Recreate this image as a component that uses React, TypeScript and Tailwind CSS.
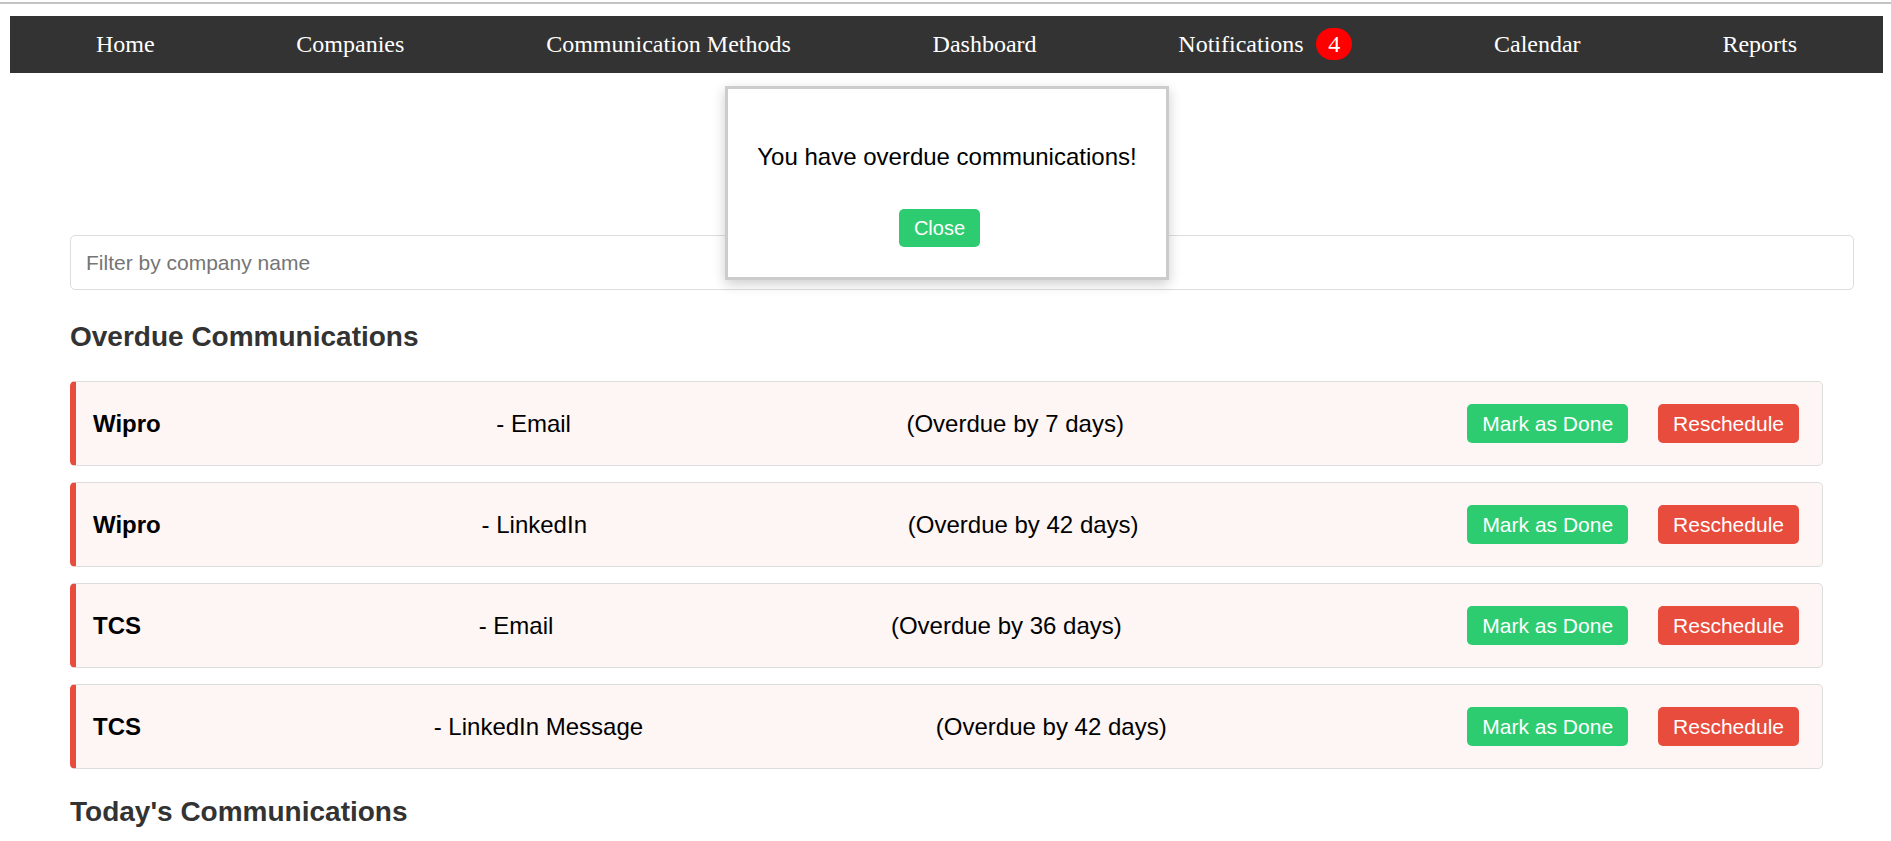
const navItems = ["Home", "Companies", "Communication Methods", "Dashboard", "Notifications", "Calendar", "Reports"];

const overdue = [
  { company: "Wipro", method: "- Email", days: 7 },
  { company: "Wipro", method: "- LinkedIn", days: 42 },
  { company: "TCS", method: "- Email", days: 36 },
  { company: "TCS", method: "- LinkedIn Message", days: 42 },
];

export default function App() {
  return (
    <div className="min-h-screen bg-white font-['Liberation_Sans',Arial,sans-serif] text-black relative">
      <div className="pt-[2px]">
        <div className="h-[2px] bg-[#c4c4c4]"></div>
      </div>

      <nav className="ml-[10px] mt-[12px] w-[1873px] h-[57px] bg-[#333] px-[15px] pb-[2px] flex justify-around items-center font-['Liberation_Serif','Times_New_Roman',serif] text-[24px] text-white">
        {navItems.map((item) => (
          <div key={item} className="flex items-center">
            <span>{item}</span>
            {item === "Notifications" && (
              <span className="ml-[12.5px] w-[36px] h-[32px] rounded-full bg-[#ff0000] flex items-center justify-center">
                4
              </span>
            )}
          </div>
        ))}
      </nav>

      <main className="ml-[70px] mt-[162px]">
        <input
          type="text"
          placeholder="Filter by company name"
          className="block w-[1784px] h-[55px] px-[15px] border border-[#ddd] rounded-[5px] text-[21px] placeholder:text-[#757575] outline-none"
        />

        <h2 className="mt-[31px] mb-[28px] text-[28px] leading-[32px] font-bold text-[#333]">
          Overdue Communications
        </h2>

        <div className="flex flex-col gap-[16px] w-[1753px]">
          {overdue.map((row, i) => (
            <div
              key={i}
              className="h-[85px] flex items-center justify-between bg-[#fef5f5] border border-[#ddd] border-l-[6px] border-l-[#e74c3c] rounded-[5px] pl-[17px] pr-[23px] text-[24px]"
            >
              <strong className="font-bold">{row.company}</strong>
              <span>{row.method}</span>
              <span>(Overdue by {row.days} days)</span>
              <div className="flex items-center gap-[30px] pl-[8px]">
                <button className="h-[39px] px-[15px] rounded-[5px] bg-[#2ecc71] text-white text-[21px]">
                  Mark as Done
                </button>
                <button className="h-[39px] px-[15px] rounded-[5px] bg-[#e74c3c] text-white text-[21px]">
                  Reschedule
                </button>
              </div>
            </div>
          ))}
        </div>

        <h2 className="mt-[27px] text-[28px] leading-[32px] font-bold text-[#333]">
          Today's Communications
        </h2>
      </main>

      <div className="absolute left-[725px] top-[86px] w-[444px] bg-white border-[3px] border-[#ccc] shadow-[0_4px_12px_rgba(0,0,0,0.2)] px-[27px] pt-[54px] pb-[30px] text-center">
        <p className="text-[24px] leading-[27.6px]">You have overdue communications!</p>
        <button className="mt-[38px] mr-[15px] h-[38px] px-[15px] rounded-[5px] bg-[#2ecc71] text-white text-[20px]">
          Close
        </button>
      </div>
    </div>
  );
}
